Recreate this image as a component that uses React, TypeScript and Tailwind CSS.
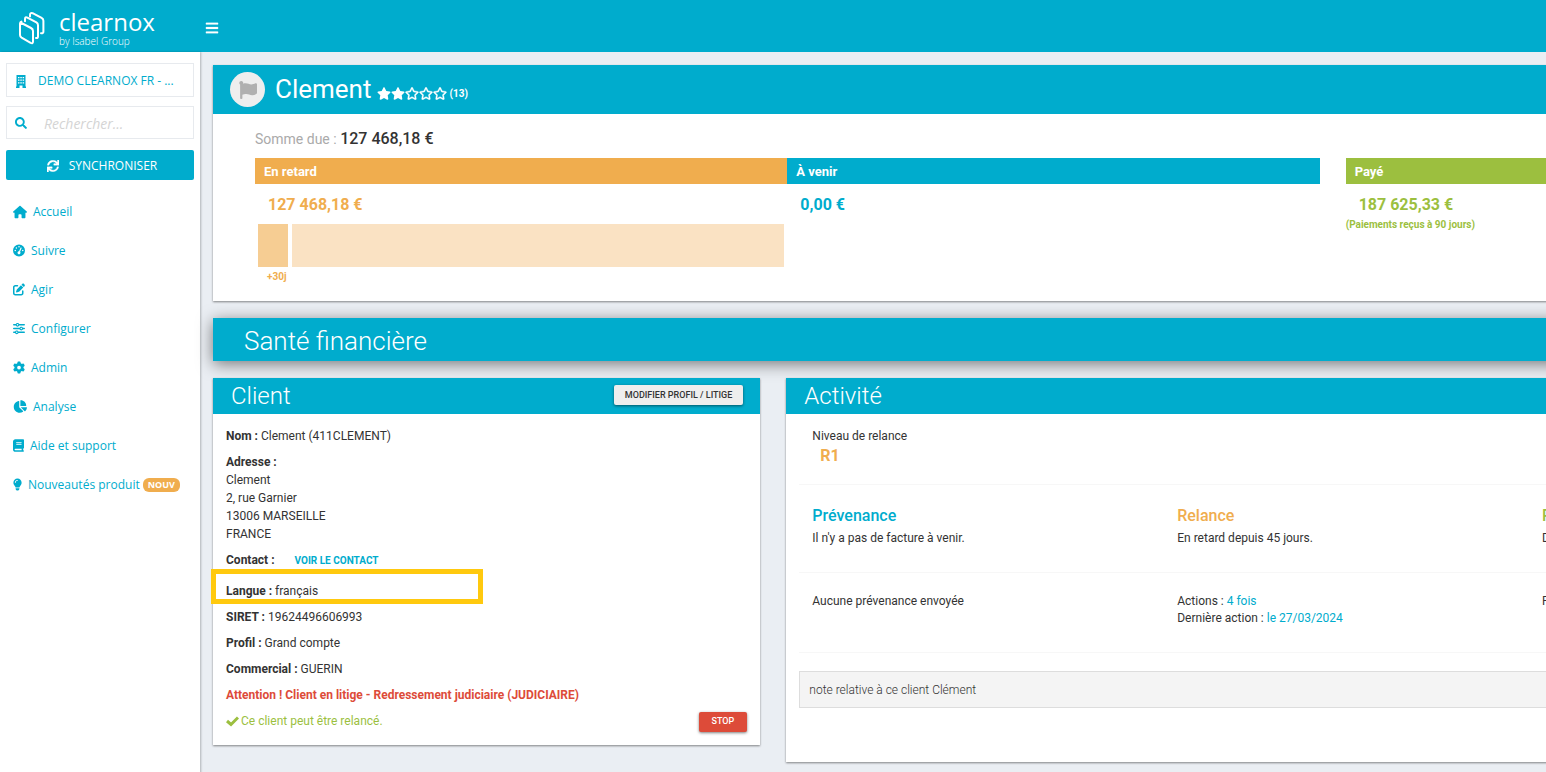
import type { ReactNode } from "react";
import clsx from "clsx";
import type { IconType } from "react-icons";
import { FaBars, FaFlag, FaRegStar, FaSearch, FaStar, FaSync } from "react-icons/fa";
import {
  FaBook,
  FaChartPie,
  FaGaugeHigh,
  FaGear,
  FaHouse,
  FaLightbulb,
  FaPenToSquare,
  FaSliders,
} from "react-icons/fa6";

type NavItem = {
  label: string;
  icon: IconType;
  iconClass: string;
  badge?: string;
};

const navItems: NavItem[] = [
  { label: "Accueil", icon: FaHouse, iconClass: "h-3.5 w-3.5" },
  { label: "Suivre", icon: FaGaugeHigh, iconClass: "h-[13px] w-3" },
  { label: "Agir", icon: FaPenToSquare, iconClass: "h-[13px] w-3" },
  { label: "Configurer", icon: FaSliders, iconClass: "h-[13px] w-3" },
  { label: "Admin", icon: FaGear, iconClass: "h-[13px] w-3" },
  { label: "Analyse", icon: FaChartPie, iconClass: "h-[13px] w-3.5" },
  { label: "Aide et support", icon: FaBook, iconClass: "h-[13px] w-[11px]" },
  { label: "Nouveautés produit", icon: FaLightbulb, iconClass: "h-[13px] w-[9px]", badge: "NOUV" },
];

const rating = [true, true, false, false, false];

const Logo = () => (
  <a href="#" className="flex items-center gap-[13px] text-white">
    <svg width="28" height="34" viewBox="0 0 28 34" fill="none" stroke="currentColor" strokeWidth="2" strokeLinejoin="round" strokeLinecap="round" aria-hidden="true">
      <path d="M2.5 11.5 L13 17 Q15 18 15 20 V30.5 Q15 33 12.6 31.8 L3.6 26.6 Q2 25.6 2 24 V12.5 Q2 11 3.4 10.6 Z" />
      <path d="M7 10.2 V8.2 Q7 5.4 9.4 6.6 L18.4 11.4 Q20 12.4 20 14.2 V25.6 Q20 27.4 18 27" />
      <path d="M12 5.6 V4.2 Q12 1.2 14.6 2.2 L23.6 6.8 Q25.4 7.8 25.4 9.8 V20.4 Q25.4 22.6 23 22.2" />
    </svg>
    <span className="flex flex-col font-['Open_Sans',sans-serif]">
      <span className="text-2xl leading-[26px] font-medium">clearnox</span>
      <span className="text-[10px] leading-3 font-light">by Isabel Group</span>
    </span>
  </a>
);

const BuildingIcon = () => (
  <svg viewBox="0 0 12 13" className="h-[13px] w-3" fill="currentColor" aria-hidden="true">
    <path
      fillRule="evenodd"
      d="M1.5 0h9v11.5h.5V13H7.5v-2.5h-3V13H1v-1.500h.5zM3 2v1.200h1.500V2zm2.300 0v1.200h1.500V2zm2.300 0v1.200h1.500V2zM3 4.600v1.200h1.500V4.600zm2.300 0v1.200h1.500V4.600zm2.300 0v1.200h1.500V4.600zM3 7.200v1.200h1.500V7.200zm2.300 0v1.200h1.500V7.200zm2.300 0v1.200h1.500V7.200z"
    />
  </svg>
);

const CheckIcon = () => (
  <svg viewBox="0 0 13 12" className="h-3 w-[13px]" fill="none" stroke="currentColor" strokeWidth="3" aria-hidden="true">
    <path d="M1 5 L5 8.500 L12 1.500" />
  </svg>
);

const Sidebar = () => (
  <aside className="w-[200px] shrink-0 bg-white px-1.5 pt-[11px] font-['Open_Sans',sans-serif] text-xs text-[#00accd] shadow-[1px_0_2px_rgba(0,0,0,0.25)]">
    <button className="flex h-[34px] w-full items-center gap-[11px] border border-[#e7eaee] px-2 pt-0.5">
      <BuildingIcon />
      DEMO CLEARNOX FR - ...
    </button>
    <label className="mt-[9px] flex h-[33px] items-center gap-[17px] border border-[#e7eaee] px-2">
      <FaSearch className="size-3 shrink-0" />
      <input
        type="text"
        aria-label="Rechercher"
        placeholder="Rechercher..."
        className="w-full pt-0.5 text-sm italic outline-none placeholder:text-[#d4d4d4]"
      />
    </label>
    <button className="mt-[11px] flex h-[30px] w-full items-center justify-center gap-2.5 rounded-xs bg-[#00accd] pt-0.5 pl-1 text-white">
      <FaSync className="size-3" stroke="currentColor" strokeWidth="12" />
      SYNCHRONISER
    </button>
    <nav className="mt-3 px-[7px]">
      {navItems.map(({ label, icon: Icon, iconClass, badge }) => (
        <a key={label} href="#" className="flex h-[39px] items-center whitespace-nowrap">
          <Icon className={clsx("mr-1.5", iconClass)} />
          {label}
          {badge && (
            <span className="ml-[3px] rounded-md bg-[#f0ad4e] px-[5px] text-[9px] leading-[14px] font-bold text-white">
              {badge}
            </span>
          )}
        </a>
      ))}
    </nav>
  </aside>
);

type CardProps = {
  title: string;
  action?: ReactNode;
  className?: string;
  children: ReactNode;
};

const Card = ({ title, action, className, children }: CardProps) => (
  <section className={clsx("relative bg-white shadow-[0_1px_2px_rgba(0,0,0,0.45)]", className)}>
    <header className="flex h-9 items-center justify-between bg-[#00accd] pr-[17px] pl-[18px]">
      <h2 className="text-2xl font-light text-white">{title}</h2>
      {action}
    </header>
    {children}
  </section>
);

const Field = ({ label, children }: { label: string; children?: ReactNode }) => (
  <p>
    <b>{label} :</b> {children}
  </p>
);

const Summary = () => (
  <section className="bg-white shadow-[0_1px_2px_rgba(0,0,0,0.45)]">
    <header className="flex h-[49px] items-center bg-[#00accd] pl-[17px] text-white">
      <span className="flex size-[35px] items-center justify-center rounded-full bg-[#eee] text-[#b0b0b0]">
        <FaFlag className="size-[18px]" />
      </span>
      <h1 className="ml-2.5 text-[26px]">Clement</h1>
      <span className="mt-2 ml-1.5 flex items-center">
        {rating.map((on, i) =>
          on ? (
            <FaStar key={i} className="h-[13px] w-3.5" />
          ) : (
            <FaRegStar key={i} className="h-[13px] w-3.5" stroke="currentColor" strokeWidth="16" />
          )
        )}
        <span className="ml-0.5 text-[10px] font-bold">(13)</span>
      </span>
    </header>
    <div className="px-[42px] pt-3.5 pb-3.5">
      <p className="text-sm leading-[22px] text-[#aaa]">
        Somme due : <b className="text-base leading-[22px] font-medium text-[#333]">127 468,18 €</b>
      </p>
      <div className="mt-2 grid grid-cols-3 gap-x-[26px]">
        <div className="col-span-2 grid grid-cols-2">
          <div>
            <h3 className="bg-[#f0ad4e] px-[9px] pt-px text-[13px] leading-[25px] font-bold text-white">En retard</h3>
            <p className="px-[13px] pt-px text-base leading-[39px] font-bold text-[#f0ad4e]">127 468,18 €</p>
            <div className="flex gap-1 px-[3px]">
              <div className="h-[43px] w-[30px] bg-[#f6cd93]" />
              <div className="h-[43px] flex-1 bg-[#fae2c3]" />
            </div>
            <p className="px-3 text-[10px] leading-5 font-bold text-[#f0ad4e]">+30j</p>
          </div>
          <div>
            <h3 className="bg-[#00accd] px-[9px] pt-px text-[13px] leading-[25px] font-bold text-white">À venir</h3>
            <p className="px-[13px] pt-px text-base leading-[39px] font-bold text-[#00accd]">0,00 €</p>
          </div>
        </div>
        <div className="text-[#9cbf3f]">
          <h3 className="bg-[#9cbf3f] px-[9px] pt-px text-[13px] leading-[25px] font-bold text-white">Payé</h3>
          <p className="px-[13px] pt-[9px] text-base leading-[23px] font-bold">187 625,33 €</p>
          <p className="text-[10px] leading-[17px] font-bold">(Paiements reçus à 90 jours)</p>
        </div>
      </div>
    </div>
  </section>
);

const ClientCard = () => (
  <Card
    title="Client"
    action={
      <button className="-mt-0.5 h-5 rounded-xs bg-[#eee] px-[11px] text-[9px] font-medium text-[#333] shadow-[0_1px_3px_rgba(0,0,0,0.5)]">
        MODIFIER PROFIL / LITIGE
      </button>
    }
  >
    <div className="flex flex-col gap-[9px] px-[13px] pt-3.5 pb-[15px]">
      <Field label="Nom">Clement (411CLEMENT)</Field>
      <div>
        <Field label="Adresse" />
        <div className="leading-[18px]">
          <p>Clement</p>
          <p>2, rue Garnier</p>
          <p>13006 MARSEILLE</p>
          <p>FRANCE</p>
        </div>
      </div>
      <div className="flex items-center gap-5">
        <Field label="Contact" />
        <button className="text-[10px] font-bold text-[#00accd]">VOIR LE CONTACT</button>
      </div>
      <div className="relative pt-[5px]">
        <Field label="Langue">français</Field>
        {/* Highlight drawn over the language row */}
        <div className="absolute top-[-9px] -left-[15px] h-[35px] w-[272px] border-5 border-[#ffc90e]" />
      </div>
      <Field label="SIRET">19624496606993</Field>
      <Field label="Profil">Grand compte</Field>
      <Field label="Commercial">GUERIN</Field>
      <p className="font-bold text-[#dd4b39]">
        Attention ! Client en litige - Redressement judiciaire (JUDICIAIRE)
      </p>
      <div className="flex items-center justify-between text-[#9cbf3f]">
        <p className="flex items-center gap-0.5">
          <CheckIcon />
          Ce client peut être relancé.
        </p>
        <button className="-my-1 h-5 rounded-xs bg-[#dd4b39] px-[13px] text-[9px] font-medium text-white shadow-[0_1px_3px_rgba(0,0,0,0.5)]">
          STOP
        </button>
      </div>
    </div>
  </Card>
);

const ActivityCard = () => (
  <Card title="Activité" className="col-span-2">
    <div className="pt-3.5 pb-[54px] pl-[13px]">
      <div className="border-b border-[#f7f7f7] px-[13px] pb-[17px]">
        <p>Niveau de relance</p>
        <p className="px-2 text-base leading-[22px] font-bold text-[#f0ad4e]">R1</p>
      </div>
      <div className="grid grid-cols-3 border-b border-[#f7f7f7] pt-4 pb-[25px] pl-[13px]">
        <div>
          <h3 className="text-base leading-[29px] font-medium text-[#00accd]">Prévenance</h3>
          <p>Il n'y a pas de facture à venir.</p>
        </div>
        <div>
          <h3 className="text-base leading-[29px] font-medium text-[#f0ad4e]">Relance</h3>
          <p>En retard depuis 45 jours.</p>
        </div>
        <div>
          <h3 className="text-base leading-[29px] font-medium text-[#9cbf3f]">P</h3>
          <p>D</p>
        </div>
      </div>
      <div className="grid grid-cols-3 border-b border-[#f7f7f7] pt-5 pb-[25px] pl-[13px]">
        <p>Aucune prévenance envoyée</p>
        <div>
          <p>
            Actions : <a href="#" className="text-[#00accd]">4 fois</a>
          </p>
          <p>
            Dernière action : <a href="#" className="text-[#00accd]">le 27/03/2024</a>
          </p>
        </div>
        <p>P</p>
      </div>
      <p className="mt-[18px] mr-[13px] border border-[#ddd] bg-[#f4f4f4] px-[9px] pt-2.5 pb-2 font-light">
        note relative à ce client Clément
      </p>
    </div>
  </Card>
);

export default function App() {
  return (
    <div className="min-h-screen overflow-hidden bg-[#eaeef3] font-[Roboto,sans-serif] text-xs leading-[17px] text-[#333]">
      {/* Desktop layout, cut off by the window on narrower screens */}
      <div className="flex min-h-screen min-w-[1920px] flex-col">
        <div className="flex h-[52px] items-center bg-[#00accd] pt-1 pl-[18px]">
          <div className="w-[187px]">
            <Logo />
          </div>
          <button aria-label="Menu" className="text-white">
            <FaBars className="size-3.5" stroke="currentColor" strokeWidth="8" />
          </button>
        </div>
        <div className="flex flex-1">
          <Sidebar />
          <main className="flex-1 p-[13px]">
            <Summary />
            <h2 className="mt-[17px] bg-[#00accd] pt-[3px] pl-[31px] text-[26px] leading-10 font-light text-white shadow-[0_3px_16px_rgba(0,0,0,0.5)]">
              Santé financière
            </h2>
            <div className="mt-[17px] grid grid-cols-3 items-start gap-x-[26px]">
              <ClientCard />
              <ActivityCard />
            </div>
          </main>
        </div>
      </div>
    </div>
  );
}
